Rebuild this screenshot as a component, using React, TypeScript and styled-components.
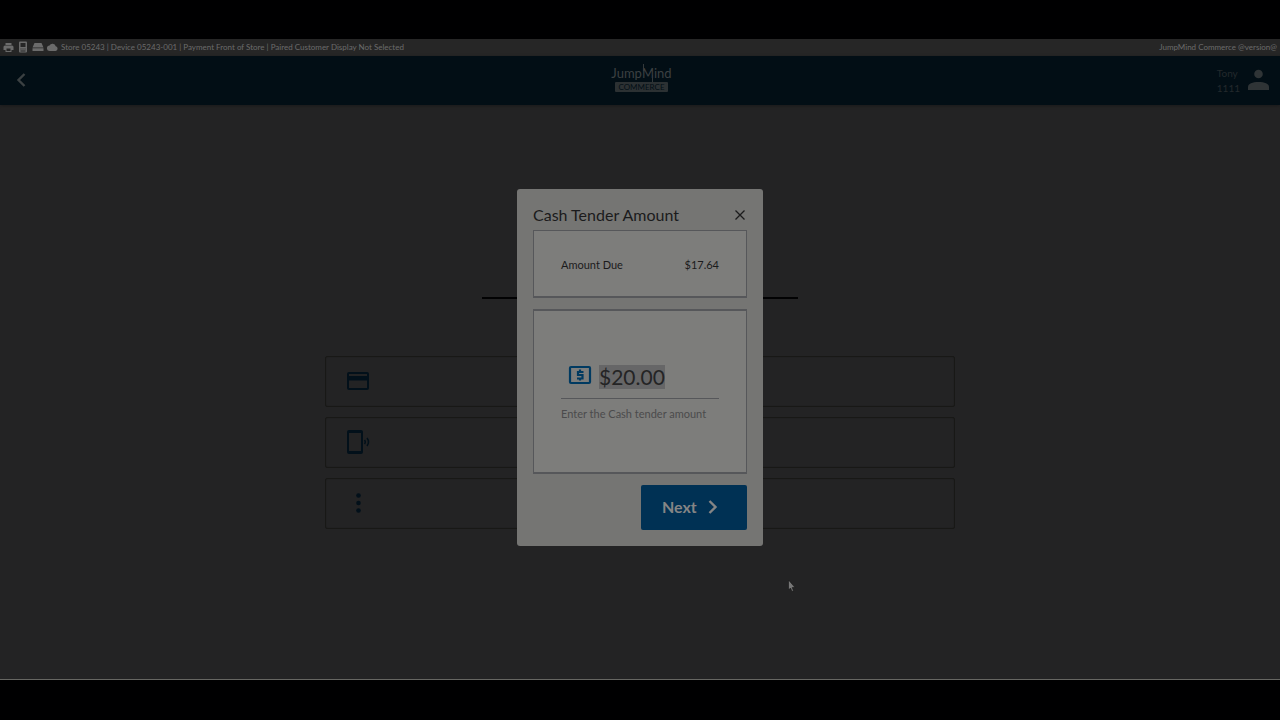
import React from 'react';
import styled, { createGlobalStyle } from 'styled-components';

const GlobalStyle = createGlobalStyle`
  * { box-sizing: border-box; }
  body { margin: 0; background: #000001; font-family: Lato, "Liberation Sans", sans-serif; }
  button, input { font: inherit; border: 0; padding: 0; margin: 0; }
`;

const Frame = styled.div`
  display: flex;
  flex-direction: column;
  min-height: 100vh;
  padding: 39px 0 40px;
`;

const StatusBar = styled.div`
  display: flex;
  align-items: center;
  justify-content: space-between;
  height: 17px;
  padding: 0 3px 1px;
  background: #262626;
  color: #6b6b6b;
  font-size: 8px;
  line-height: 14px;
`;

const StatusInfo = styled.div`
  display: flex;
  align-items: center;
  gap: 3px;
`;

const Workspace = styled.div`
  position: relative;
  display: flex;
  flex-direction: column;
  flex: 1;
  background: #232324;
  border-bottom: 1px solid #666662;
`;

const Header = styled.header`
  display: grid;
  grid-template-columns: 1fr auto 1fr;
  align-items: center;
  height: 49px;
  padding: 0 11px 2px 14px;
  background: #020e15;
  box-shadow: 0 1px 3px #19191a;
`;

const IconButton = styled.button`
  display: flex;
  align-items: center;
  justify-content: center;
  width: 14px;
  height: 20px;
  background: transparent;
  color: ${({ color }) => color};
  justify-self: start;
`;

const Brand = styled.div`
  display: flex;
  flex-direction: column;
  align-items: center;
  gap: 1px;
  padding-bottom: 2px;
  color: #3c4042;
`;

const BrandName = styled.div`
  font-size: 13px;
  line-height: 16px;
`;

const BrandInitial = styled.span`
  position: relative;

  &::before,
  &::after {
    content: '';
    position: absolute;
    width: 1px;
    height: 7px;
    background: #34393b;
  }
  &::before { left: 1px; top: -1px; }
  &::after { right: 1px; bottom: -1px; }
`;

const BrandTag = styled.div`
  padding: 0 3px;
  border-radius: 1px;
  background: #2c3133;
  color: #020e15;
  font-size: 8px;
  line-height: 10px;
`;

const User = styled.div`
  display: flex;
  align-items: center;
  justify-content: flex-end;
  gap: 8px;
  color: #2f3436;
`;

const UserText = styled.div`
  padding-top: 2px;
  color: #23292c;
  font-size: 10px;
  line-height: 15px;
`;

const Main = styled.main`
  display: flex;
  flex-direction: column;
  align-items: center;
  padding: 192px 16px 0;
`;

const Rule = styled.hr`
  width: 100%;
  max-width: 316px;
  height: 2px;
  margin: 0 0 57px;
  border: 0;
  background: #020203;
`;

const Options = styled.div`
  display: flex;
  flex-direction: column;
  gap: 10px;
  width: 100%;
  max-width: 630px;
`;

const Option = styled.button`
  display: flex;
  align-items: center;
  height: 51px;
  padding: 0 20px 2px;
  border: 1px solid #181816;
  border-radius: 2px;
  box-shadow: inset 0 0 1px #181816;
  background: #232324;
  color: #02101a;
`;

const Overlay = styled.div`
  position: absolute;
  inset: 0;
  display: flex;
  align-items: center;
  justify-content: center;
`;

const Dialog = styled.form`
  display: flex;
  flex-direction: column;
  width: 246px;
  padding: 16px;
  border-radius: 3px;
  background: #757573;
  color: #1b1b1c;
`;

const DialogHead = styled.div`
  display: flex;
  align-items: flex-start;
  justify-content: space-between;
  height: 25px;
`;

const Title = styled.h1`
  margin: 0;
  font-size: 16px;
  font-weight: 400;
  line-height: 20px;
`;

const Panel = styled.div`
  border: 1px solid #56575a;
  background: #7d7d7b;
`;

const Summary = styled(Panel)`
  display: flex;
  align-items: center;
  justify-content: space-between;
  height: 68px;
  padding: 2px 27px 0;
  border-bottom-width: 2px;
  font-size: 11px;
`;

const Entry = styled(Panel)`
  display: flex;
  flex-direction: column;
  height: 165px;
  margin: 11px 0;
  padding: 54px 27px 0;
  border-top-width: 2px;
  border-bottom-width: 2px;
`;

const Field = styled.div`
  display: flex;
  align-items: flex-start;
  gap: 7px;
  height: 34px;
  padding-left: 7px;
  border-bottom: 1px solid #56575a;
`;

const AmountInput = styled.input`
  width: 66px;
  height: 24px;
  border-radius: 0;
  background: #666667;
  color: #242425;
  font-size: 21px;
  line-height: 24px;
  outline: 0;
`;

const Hint = styled.label`
  margin-top: 7px;
  color: #4b4b4c;
  font-size: 11px;
  line-height: 16px;
`;

const NextButton = styled.button`
  display: flex;
  align-items: center;
  gap: 11px;
  align-self: flex-end;
  width: 106px;
  height: 45px;
  padding: 0 0 2px 21px;
  border-radius: 2px;
  background: #003154;
  color: #858585;
  font-size: 16px;
  font-weight: 700;
`;

const Pointer = styled.svg`
  position: absolute;
  left: 788px;
  top: 523px;
`;

const Chevron = ({ left = false }: { left?: boolean }) => (
  <svg width="10" height="14" viewBox="0 0 10 14" fill="none" stroke="currentColor" strokeWidth="2.4">
    <path d={left ? 'M8.5 1 2.5 7l6 6' : 'M1.5 1l6 6-6 6'} />
  </svg>
);

const PrinterIcon = () => (
  <svg width="11" height="11" viewBox="0 0 11 11" fill="currentColor">
    <path fillRule="evenodd" d="M2.5 1h6v2h-6zM2 3.500h7a1.500 1.500 0 0 1 1.500 1.500v3h-2v2h-6v-2h-2v-3a1.500 1.500 0 0 1 1.500-1.500zm1.500 3v2.500h4v-2.500z" />
  </svg>
);

const TerminalIcon = () => (
  <svg width="12" height="12" viewBox="0 0 12 12" fill="currentColor">
    <path fillRule="evenodd" d="M3 .5h6a1 1 0 0 1 1 1v9a1 1 0 0 1-1 1H3a1 1 0 0 1-1-1v-9a1 1 0 0 1 1-1zm.5 1.500v4h5V2zm0 5.500v1h1v-1zm2 0v1h1v-1zm2 0v1h1v-1zm-4 2v1h5v-1z" />
  </svg>
);

const DrawerIcon = () => (
  <svg width="12" height="12" viewBox="0 0 12 12" fill="currentColor">
    <path d="M2.500 2h7l2 4.500H.500zM.5 7.300h11v2.700H.500z" />
  </svg>
);

const CloudIcon = () => (
  <svg width="11" height="10" viewBox="0 0 11 10" fill="currentColor">
    <path d="M2.800 9a2.700 2.700 0 0 1-.3-5.400 3.300 3.300 0 0 1 6.200.7A2.400 2.400 0 0 1 8.600 9z" />
  </svg>
);

const PersonIcon = () => (
  <svg width="21" height="22" viewBox="0 0 21 22" fill="currentColor">
    <circle cx="10.500" cy="5" r="4.300" />
    <path d="M0 21v-3c0-3.300 4.500-5 10.500-5s10.500 1.700 10.500 5v3z" />
  </svg>
);

const CardIcon = () => (
  <svg width="24" height="20" viewBox="0 0 24 20" fill="currentColor">
    <path fillRule="evenodd" d="M3 1h18a2 2 0 0 1 2 2v14a2 2 0 0 1-2 2H3a2 2 0 0 1-2-2V3a2 2 0 0 1 2-2zm0 2v2h18V3zm0 6.500V17h18V9.500z" />
  </svg>
);

const PhoneIcon = () => (
  <svg width="24" height="26" viewBox="0 0 24 26" fill="none" stroke="currentColor">
    <path d="M1 3a2 2 0 0 1 2-2h12a2 2 0 0 1 2 2v20a2 2 0 0 1-2 2H3a2 2 0 0 1-2-2zm2 1v18h12V4z" fill="currentColor" fillRule="evenodd" stroke="none" />
    <path d="M18.500 11q1.500 2 0 4M21 9q3 4 0 8" strokeWidth="1.500" />
  </svg>
);

const MoreIcon = () => (
  <svg width="24" height="20" viewBox="0 0 24 20" fill="currentColor">
    <circle cx="12.500" cy="2.500" r="2.300" />
    <circle cx="12.500" cy="10" r="2.300" />
    <circle cx="12.500" cy="17.500" r="2.300" />
  </svg>
);

const CashIcon = () => (
  <svg width="24" height="20" viewBox="0 0 24 20" fill="none" stroke="#003a61" strokeWidth="2.200">
    <rect x="2" y="2" width="20" height="16" rx="1" />
    <path d="M15.500 7H10v3h4.500v3.500H9M12 4.500v2.500M12 13v2.500" />
  </svg>
);

export default function App() {
  return (
    <Frame>
      <GlobalStyle />
      <StatusBar>
        <StatusInfo>
          <PrinterIcon />
          <TerminalIcon />
          <DrawerIcon />
          <CloudIcon />
          <span>Store 05243 | Device 05243-001 | Payment Front of Store | Paired Customer Display Not Selected</span>
        </StatusInfo>
        <span>JumpMind Commerce @version@</span>
      </StatusBar>
      <Workspace>
        <Header>
          <IconButton type="button" aria-label="Back" color="#3b4042"><Chevron left /></IconButton>
          <Brand>
            <BrandName>Jump<BrandInitial>M</BrandInitial>ind</BrandName>
            <BrandTag>COMMERCE</BrandTag>
          </Brand>
          <User>
            <UserText>Tony<br />1111</UserText>
            <PersonIcon />
          </User>
        </Header>
        <Main>
          <Rule />
          <Options>
            <Option type="button" aria-label="Card"><CardIcon /></Option>
            <Option type="button" aria-label="Mobile payment"><PhoneIcon /></Option>
            <Option type="button" aria-label="More options"><MoreIcon /></Option>
          </Options>
        </Main>
        <Overlay>
          <Dialog role="dialog" aria-labelledby="dialog-title" onSubmit={(e) => e.preventDefault()}>
            <DialogHead>
              <Title id="dialog-title">Cash Tender Amount</Title>
              <IconButton type="button" aria-label="Close" color="#1b1b1c">
                <svg width="10" height="10" viewBox="0 0 10 10" fill="none" stroke="currentColor" strokeWidth="1.300">
                  <path d="M.5.5l9 9M9.500.5l-9 9" />
                </svg>
              </IconButton>
            </DialogHead>
            <Summary>
              <span>Amount Due</span>
              <span>$17.64</span>
            </Summary>
            <Entry>
              <Field>
                <CashIcon />
                <AmountInput id="tender" type="text" defaultValue="$20.00" />
              </Field>
              <Hint htmlFor="tender">Enter the Cash tender amount</Hint>
            </Entry>
            <NextButton type="submit">Next <Chevron /></NextButton>
          </Dialog>
        </Overlay>
        <Pointer width="8" height="14" viewBox="0 0 8 14">
          <path d="M.5 1v10l2-2 1.500 3.500 1.500-.7L4.200 8.500H7z" fill="#777" stroke="#151515" strokeWidth=".6" />
        </Pointer>
      </Workspace>
    </Frame>
  );
}
